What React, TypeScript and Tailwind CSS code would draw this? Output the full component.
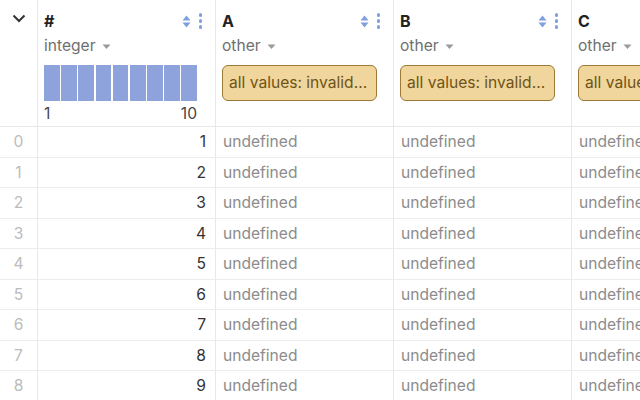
import React from "react";

const COLS = ["A", "B", "C"];
const ROWS = [0, 1, 2, 3, 4, 5, 6, 7, 8];

const SortIcon = () => (
  <svg width="9" height="13" viewBox="0 0 9 13" className="text-[#7f9fdf]">
    <path d="M4.5 0.5 L8.5 5.5 H0.5 Z" fill="currentColor" />
    <path d="M4.5 12.5 L8.5 7.5 H0.5 Z" fill="currentColor" />
  </svg>
);

const Kebab = () => (
  <div className="flex flex-col gap-[2.5px]">
    <span className="w-[3.5px] h-[3.5px] rounded-full bg-[#7f9fdf]" />
    <span className="w-[3.5px] h-[3.5px] rounded-full bg-[#7f9fdf]" />
    <span className="w-[3.5px] h-[3.5px] rounded-full bg-[#7f9fdf]" />
  </div>
);

const Caret = () => (
  <svg width="9" height="6" viewBox="0 0 9 6" className="ml-[6px] mt-[2px]">
    <path d="M0.5 0.5 H8.5 L4.5 5 Z" fill="#9a9a9a" />
  </svg>
);

const HeaderTop = ({ name, icons }: { name: string; icons?: boolean }) => (
  <div className="flex items-center justify-between h-[26px] mt-[8px] pr-[13px]">
    <span className="text-[16px] font-bold text-[#222]">{name}</span>
    {icons && (
      <div className="flex items-center gap-[8px]">
        <SortIcon />
        <Kebab />
      </div>
    )}
  </div>
);

const App = () => {
  return (
    <div className="w-[640px] h-[400px] overflow-hidden bg-white font-['Inter',sans-serif] text-[15.6px]">
      <div className="w-[800px]">
        {/* Header */}
        <div className="flex h-[127px] border-b border-[#e8e8e8]">
          <div className="w-[38px] shrink-0 border-r border-[#e8e8e8] flex justify-center pt-[10px]">
            <svg width="16" height="16" viewBox="0 0 16 16">
              <path d="M2.5 5.5 L8 11 L13.5 5.5" fill="none" stroke="#333" strokeWidth="2" />
            </svg>
          </div>
          <div className="w-[178px] shrink-0 border-r border-[#e8e8e8] pl-[6px]">
            <HeaderTop name="#" icons />
            <div className="flex items-center h-[24px] text-[#707070]">
              integer
              <Caret />
            </div>
            <div className="flex gap-[1.5px] w-[153px] h-[36px] mt-[7px]">
              {[0, 1, 2, 3, 4, 5, 6, 7, 8].map((i) => (
                <div key={i} className="flex-1 bg-[#8ea2db]" />
              ))}
            </div>
            <div className="flex justify-between w-[153px] text-[#444] leading-[26px]">
              <span>1</span>
              <span>10</span>
            </div>
          </div>
          {COLS.map((c) => (
            <div key={c} className="w-[178px] shrink-0 border-r border-[#e8e8e8] pl-[6px]">
              <HeaderTop name={c} icons={c !== "C"} />
              <div className="flex items-center h-[24px] text-[#707070]">
                other
                <Caret />
              </div>
              <div className="mt-[7px] w-[155px] h-[36px] rounded-[6px] border border-[#9c7a35] bg-[#f0d69c] text-[#6e5418] flex items-center pl-[6px] whitespace-nowrap overflow-hidden">
                all values: invalid...
              </div>
            </div>
          ))}
        </div>

        {/* Rows */}
        {ROWS.map((r) => (
          <div key={r} className="flex h-[30.5px] border-b border-[#ececec]">
            <div className="w-[38px] shrink-0 border-r border-[#e8e8e8] flex items-center justify-center text-[#bcbcbc]">
              {r}
            </div>
            <div className="w-[178px] shrink-0 border-r border-[#e8e8e8] flex items-center justify-end pr-[9px] text-[#333]">
              {r + 1}
            </div>
            {COLS.map((c) => (
              <div key={c} className="w-[178px] shrink-0 border-r border-[#e8e8e8] flex items-center pl-[7px] text-[#8c8c8c]">
                undefined
              </div>
            ))}
          </div>
        ))}
      </div>
    </div>
  );
};

export default App;
